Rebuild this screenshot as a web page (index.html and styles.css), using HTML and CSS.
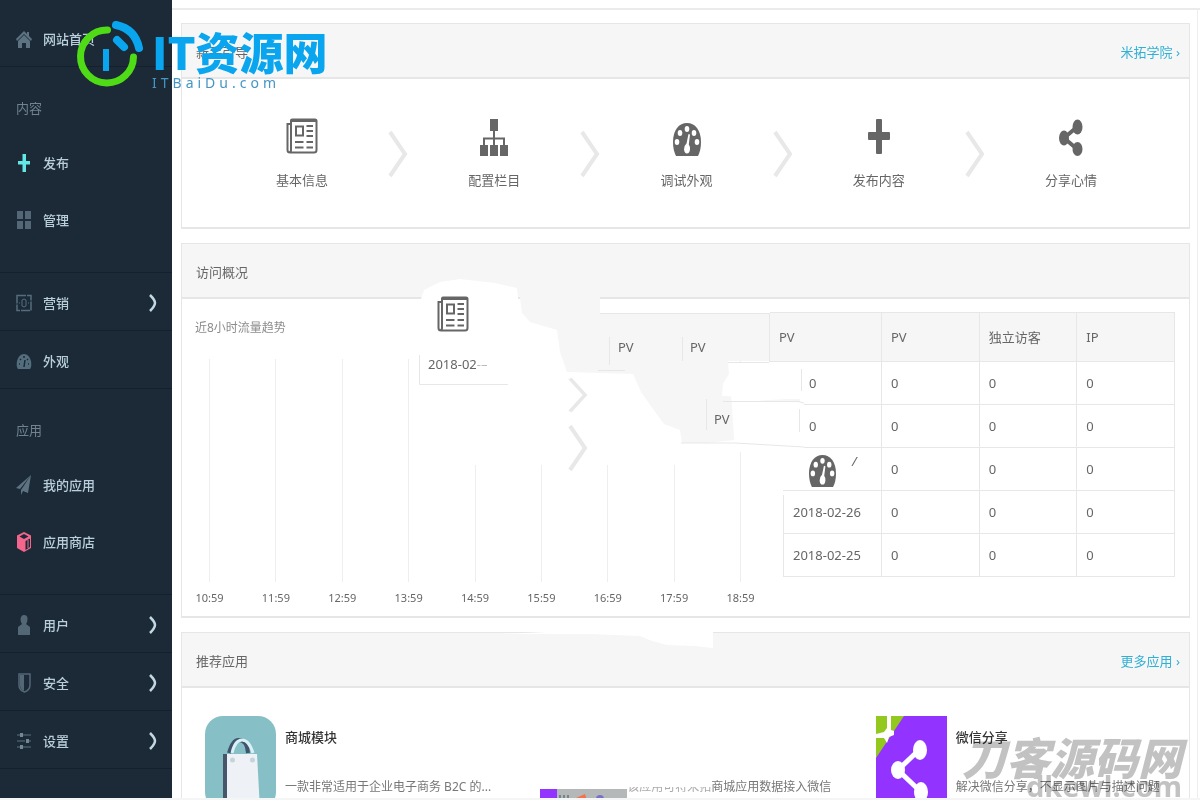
FILE: index.html
```html
<!DOCTYPE html>
<html lang="zh-CN">
<head>
<meta charset="utf-8">
<title>网站首页</title>
<link rel="stylesheet" href="styles.css">
</head>
<body>
<svg class="defs" aria-hidden="true">
  <symbol id="news" viewBox="0 0 32 36" preserveAspectRatio="none"><path d="M5 2.500Q5 1.500 6 1.500H29Q30.500 1.500 30.500 3V32Q30.500 34.500 28 34.500H4Q1.500 34.500 1.500 32V6H5M5 2.500V32Q5 34 3.500 34" fill="none" stroke="currentColor" stroke-width="2"/><path d="M6 2.500H30" stroke="currentColor" stroke-width="3"/><path d="M10 8.500h7v9h-7z" fill="none" stroke="currentColor" stroke-width="2"/><path d="M20.500 8H27M20.500 13H27M20.500 18H27M9 24h8.500M20.500 24H27M9 29.500h8.500M20.500 29.500H27" stroke="currentColor" stroke-width="2"/></symbol>
  <symbol id="gauge" viewBox="0 0 28 34" preserveAspectRatio="none"><path d="M3 34Q0 28 0 20C0 8 6 1 14 1s14 7 14 19q0 8-3 14z" fill="currentColor"/><g fill="#fff"><ellipse cx="14" cy="7" rx="2.300" ry="3"/><ellipse cx="7" cy="11" rx="2.300" ry="3"/><ellipse cx="21" cy="11" rx="2.300" ry="3"/><ellipse cx="4" cy="20" rx="2.300" ry="3"/><ellipse cx="24" cy="20" rx="2.300" ry="3"/><path d="M15.500 12l1.500.5-1.200 10q1.500 2 1.200 5-.5 4-3 4t-3-4q0-4 2.500-6z"/></g></symbol>
  <symbol id="caret" viewBox="0 0 20 48" preserveAspectRatio="none"><path d="M2 2L17 24L2 46" fill="none" stroke="currentColor" stroke-width="4"/></symbol>
  <symbol id="arrow" viewBox="0 0 8 18"><path d="M1 1Q6 6 6 9T1 17" fill="none" stroke="currentColor" stroke-width="2.500"/></symbol>
</svg>
<div class="shell">
  <nav class="sidebar">
    <a class="item home" href="#"><svg viewBox="0 0 16 20"><path d="M8 2L0 10l1 2 7-7 7 7 1-2-3-3V3h-2v2zM2 12v7h4v-5h4v5h4v-7L8 6z" fill="#5d7381"/></svg>网站首页</a>
    <section class="group">
      <h2>内容</h2>
      <a class="item" href="#"><svg viewBox="0 0 16 20"><path d="M6.500 1h3.500v7H14v3.500h-4V19H6.500v-7.500H2V8h4.500z" fill="#62e6e6"/></svg>发布</a>
      <a class="item" href="#"><svg viewBox="0 0 16 20"><path d="M1 1h6v8H1zM9 1h6v8H9zM1 11h6v8H1zM9 11h6v8H9z" fill="#536775"/></svg>管理</a>
    </section>
    <section class="stack">
      <a class="item" href="#"><svg viewBox="0 0 16 20"><path d="M1 2.500h14v15H1z" fill="none" stroke="#536d7d" stroke-width="1.500" stroke-dasharray="9 1"/><path d="M6 7q2-2 4 0v6q-2 2-4 0zM3 10h1M12 10h1" fill="none" stroke="#536d7d"/></svg>营销<svg class="arrow"><use href="#arrow"/></svg></a>
      <a class="item" href="#"><svg viewBox="0 0 16 20"><path d="M2 18Q0 15 1 10 3 3 8 3t7 7q1 5-1 8z" fill="#536d7d"/><path d="M8 5v2M4 8l1 1M12 8l-1 1M3 13h1M12 13h1M9 9l-1 7" stroke="#1c2a37" stroke-width="1.500"/></svg>外观</a>
    </section>
    <section class="group">
      <h2>应用</h2>
      <a class="item" href="#"><svg viewBox="0 0 16 20"><path d="M15 0L0 13l4 1zM15 0L5 15v5l2-4 5 2z" fill="#5d7381"/></svg>我的应用</a>
      <a class="item" href="#"><svg viewBox="0 0 16 20"><path d="M8 0L1 3.500V16l7 4 7-4V3.500z" fill="#f5668c"/><path d="M8 2L3.500 4.500 8 7l4.500-2.500zM9.500 9L14 6.500V15l-4.500 3z" fill="#1c2a37"/><path d="M12 8v8" stroke="#f5668c"/></svg>应用商店</a>
    </section>
    <section class="stack lower">
      <a class="item" href="#"><svg viewBox="0 0 16 20"><path d="M8 0q4 0 3.500 5Q11 8 10 9l4 3v8H2v-8l4-3Q4.500 7 4.500 4 5 0 8 0z" fill="#536775"/></svg>用户<svg class="arrow"><use href="#arrow"/></svg></a>
      <a class="item" href="#"><svg viewBox="0 0 16 20"><path d="M3 1h11v11q0 5-5.500 7Q3 17 3 12z" fill="none" stroke="#536775" stroke-width="1.500"/><path d="M4 2h4v16Q4 16 4 12z" fill="#536775"/></svg>安全<svg class="arrow"><use href="#arrow"/></svg></a>
      <a class="item" href="#"><svg viewBox="0 0 16 20"><path d="M1 4h3M7 4h8M1 10h8M12 10h3M1 16h3M7 16h8" stroke="#465b69" stroke-width="1.500"/><path d="M4 4h3M10 10h3M4 16h3" stroke="#738895" stroke-width="4"/></svg>设置<svg class="arrow"><use href="#arrow"/></svg></a>
    </section>
  </nav>

  <main class="main">
    <div class="topbar"></div>
    <div class="panels">
      <section class="panel">
        <header class="head"><h1>新手引导</h1><a href="#">米拓学院 ›</a></header>
        <div class="steps">
          <a class="step" href="#"><svg class="news"><use href="#news"/></svg><span>基本信息</span></a>
          <svg class="caret"><use href="#caret"/></svg>
          <a class="step" href="#"><svg viewBox="0 0 28 38"><path d="M10 1h8v12h-8zM0 27h8v11H0zM10 27h8v11h-8zM20 27h8v11h-8z" fill="currentColor"/><path d="M14 12v16M4 28v-7.500h20V28" fill="none" stroke="currentColor" stroke-width="2"/></svg><span>配置栏目</span></a>
          <svg class="caret"><use href="#caret"/></svg>
          <a class="step" href="#"><svg class="gauge"><use href="#gauge"/></svg><span>调试外观</span></a>
          <svg class="caret"><use href="#caret"/></svg>
          <a class="step" href="#"><svg viewBox="0 0 28 38"><path d="M11 2q0-1 1-1h4q1 0 1 1v12h7q1 0 1 1v6q0 1-1 1h-7v13q0 1-1 1h-4q-1 0-1-1V22H4q-1 0-1-1v-6q0-1 1-1h7z" fill="currentColor"/></svg><span>发布内容</span></a>
          <svg class="caret"><use href="#caret"/></svg>
          <a class="step" href="#"><svg viewBox="0 0 28 38"><path d="M20 9L7 20l13 11" fill="none" stroke="currentColor" stroke-width="4"/><g fill="currentColor"><ellipse cx="20.500" cy="9" rx="5" ry="7.500"/><ellipse cx="7" cy="20" rx="5" ry="7.500"/><ellipse cx="20.500" cy="31" rx="5" ry="7"/></g></svg><span>分享心情</span></a>
        </div>
      </section>

      <section class="panel">
        <header class="head"><h1>访问概况</h1></header>
        <div class="visits">
          <div class="chart">
            <h2>近8小时流量趋势</h2>
            <div class="ticks">
              <span>10:59</span><span>11:59</span><span>12:59</span><span>13:59</span><span>14:59</span><span>15:59</span><span>16:59</span><span>17:59</span><span>18:59</span>
            </div>
          </div>
          <table>
            <thead><tr><th>PV</th><th>PV</th><th>独立访客</th><th>IP</th></tr></thead>
            <tbody>
              <tr><td class="shift">0</td><td>0</td><td>0</td><td>0</td></tr>
              <tr><td class="shift">0</td><td>0</td><td>0</td><td>0</td></tr>
              <tr><td class="shift"><svg class="gauge"><use href="#gauge"/></svg><i>/</i></td><td>0</td><td>0</td><td>0</td></tr>
              <tr><td class="date">2018-02-26</td><td>0</td><td>0</td><td>0</td></tr>
              <tr><td class="date">2018-02-25</td><td>0</td><td>0</td><td>0</td></tr>
            </tbody>
          </table>
          <svg class="patch" viewBox="415 275 390 380" width="390" height="380" aria-hidden="true">
            <path d="M419 360V305L424 290 440 282 460 279 495 283 517 288 520 315 530 322 557 330 560 352 572 372H635L650 400 682 430V465H419z" fill="#fff"/>
            <path d="M517 290H600V313H770V361H728L729 374 723 384 722 396 800 399V440H735L706 443H682L680 430 664 424 653 409 641 392 633 374 567 372 560 352 557 330 530 322 522 313 520 298z" fill="#f6f6f6"/>
            <path d="M600 301H770V313H600z" fill="#fff"/>
            <path d="M729 363H804V398L738 402 745 441 804 443V452H783V580H766V452H735z" fill="#fff"/>
            <path d="M736 402H804V443L736 441z" fill="#fff"/>
            <g fill="none" stroke="#e7e7e7"><path d="M600 313.500H769M728 362.500H769M598 370.500H625M419.500 355V384.500H508M609.500 337V365M682.500 337V361M706.500 399V430M769.500 313V362M723 401.500H798L804 403M681 443L735 443 804 447M801.500 369V391M799.500 409V432M783.500 495V577"/></g>
            <path d="M500 634L590 634 640 636 652 641 667 645 695 646 713 648V630H590z" fill="#fff"/>
          </svg>
          <svg class="float news pin-news"><use href="#news"/></svg>
          <span class="float pin-date">2018-02<b>-–</b></span>
          <span class="float pin-a">PV</span>
          <span class="float pin-b">PV</span>
          <span class="float pin-c">PV</span>
          <svg class="float caret pin-d"><use href="#caret"/></svg>
          <svg class="float caret pin-e"><use href="#caret"/></svg>
        </div>
      </section>

      <section class="panel">
        <header class="head"><h1>推荐应用</h1><a href="#">更多应用 ›</a></header>
        <div class="apps">
          <article class="app">
            <svg class="logo" viewBox="0 0 71 94"><rect width="71" height="94" rx="18" fill="#86c0c6"/><path d="M18 38h5v56h-5z" fill="#46566b"/><path d="M22 38h30l3 56H22z" fill="#eef2f7"/><path d="M24 37q4-14 10-13 8 0 9 13" fill="none" stroke="#40546a" stroke-width="4"/><path d="M27 37q3-13 10-13t11 13" fill="none" stroke="#d9f1f6" stroke-width="3"/><circle cx="27.500" cy="44" r="2.500" fill="#c5d4da"/><circle cx="47.500" cy="44" r="2.500" fill="#c5d4da"/></svg>
            <div><h3>商城模块</h3><p>一款非常适用于企业电子商务 B2C 的...</p></div>
          </article>
          <article class="app cut">
            <svg class="strip" viewBox="0 0 87 11"><path d="M0 0h17v11H0z" fill="#9333ff"/><path d="M17 0h70v11H17z" fill="#b5b8b8"/><path d="M20 6v5M24 6v5M28 6v5" stroke="#76858b" stroke-width="2"/><path d="M36 9l9-4 2 6H36z" fill="#f4734e"/><circle cx="60" cy="10" r="4" fill="#7771c9"/></svg>
            <div><p><span class="half">该应用可将米拓</span>商城应用数据接入微信</p></div>
          </article>
          <article class="app">
            <svg class="logo" viewBox="0 0 71 94"><path d="M0 0h71v94H0z" fill="#9333ff"/><path d="M0 0h28L0 42z" fill="#93c81f"/><path d="M11 0h4v14l3 1v4l-5 2-2 6-3-5H0v-4l8-2 3-4z" fill="#fff"/><path d="M44 33L22 54l23 22" fill="none" stroke="#fff" stroke-width="5"/><g fill="#fff"><ellipse cx="44" cy="34" rx="7" ry="10"/><ellipse cx="22" cy="54" rx="7" ry="9"/><ellipse cx="45" cy="76" rx="7" ry="10"/></g></svg>
            <div><h3>微信分享</h3><p>解决微信分享，不显示图片与描述问题</p></div>
          </article>
        </div>
      </section>
    </div>
  </main>
</div>

<div class="brand">
  <svg viewBox="0 0 68 68" width="68" height="68"><path d="M32.500 10A26.500 26.500 0 1 0 58.500 37" fill="none" stroke="#4fdb16" stroke-width="7" stroke-linecap="round"/><path d="M41 5Q60 9 64 28M42 20l7 7" fill="none" stroke="#0aa5ef" stroke-width="8" stroke-linecap="round"/><path d="M31 29v22" stroke="#0aa5ef" stroke-width="6"/></svg>
  <div><strong>IT资源网</strong><small>ITBaiDu.com</small></div>
</div>
<div class="mark"><strong>刀客源码网</strong><small>dkewl.com</small></div>
</body>
</html>
```
FILE: styles.css
```css
* { box-sizing: border-box; }
body {
  margin: 0;
  height: 100vh;
  overflow: hidden;
  background: #fff;
  color: #666;
  font: 13px/20px "Noto Sans", "Noto Sans CJK SC", sans-serif;
}
h1, h2, h3, p { margin: 0; font-size: 13px; font-weight: 400; }
a { color: inherit; text-decoration: none; }
.defs { position: absolute; width: 0; height: 0; }
.shell { display: flex; height: 100vh; overflow: hidden; border-bottom: 2px solid #f4f6f6; }

.sidebar { flex: 0 0 172px; padding-top: 12px; background: #1c2a37; color: #b9cfdb; font-weight: 500; }
.sidebar .item { display: flex; align-items: center; height: 57px; padding: 0 15px 0 16px; }
.sidebar .item svg { width: 16px; height: 20px; margin-right: 11px; }
.sidebar .item .arrow { width: 8px; height: 18px; margin: 0 0 0 auto; color: #c3d8df; }
.sidebar .home { height: 55px; border-bottom: 1px solid #14202c; }
.group { padding: 15px 0 24px; border-bottom: 1px solid #14202c; }
.group h2 { padding: 16px; color: #71838f; }
.stack .item { height: 58px; padding-top: 2px; border-bottom: 1px solid #14202c; }
.lower .item { padding-top: 3px; }

.main { flex: 1; min-width: 0; }
.topbar { height: 10px; border-bottom: 2px solid #ebebeb; }
.panels { display: flex; flex-direction: column; gap: 14px; margin-right: 2px; padding: 13px 7px 0 9px; border-right: 1px solid #eee; }
.panel { border: 1px solid #e6e6e6; border-bottom-width: 2px; background: #fff; }
.head { display: flex; align-items: center; justify-content: space-between; height: 55px; padding: 3px 9px 0 14px; border-bottom: 2px solid #e6e6e6; background: #f6f6f6; }
.head a { color: #31b0d5; }

.steps { display: flex; align-items: center; padding: 2px 30px 0 32px; height: 148px; }
.step { flex: 1; display: flex; flex-direction: column; align-items: center; gap: 14px; color: #666; }
.step svg { width: 28px; height: 38px; }
.step .gauge { padding-top: 4px; }
.step .news { width: 32px; height: 38px; padding-bottom: 2px; }
.news { width: 32px; height: 36px; }
.caret { width: 20px; height: 48px; margin: 0 -2px; color: #e8e8e8; }

.visits { position: relative; display: grid; grid-template-columns: minmax(0, 560fr) minmax(0, 406fr); gap: 14px; padding: 13px 14px 4px 13px; }
.chart { display: flex; flex-direction: column; padding-bottom: 4px; }
.chart h2 { padding: 6px 0 21px; color: #8c8c8c; font-size: 12px; }
.ticks { flex: 1; display: flex; justify-content: space-between; }
.ticks span { display: flex; flex-direction: column; align-items: center; gap: 6px; width: 29px; font-size: 11px; }
.ticks span::before { content: ""; flex: 1; width: 1px; background: #eee; }

table { width: 100%; margin-bottom: 35px; border-collapse: collapse; table-layout: fixed; }
th, td { height: 43px; padding: 0 9px; border: 1px solid #e7e7e7; text-align: left; font-weight: 400; }
th { height: 49px; background: #f6f6f6; }
th:first-child { width: 112px; }
td.shift { padding-left: 39px; border-left-color: transparent; white-space: nowrap; }
td.shift i { margin-left: 16px; vertical-align: 8px; }
td.date { padding-left: 23px; border-left-color: transparent; }
td .gauge { width: 27px; height: 33px; vertical-align: middle; }

.float, .patch { position: absolute; }
.patch { left: 233px; top: -24px; }
.pin-news { left: 255px; top: -3px; }
.pin-date { left: 246px; top: 55px; }
.pin-date b { color: #bbb; font-weight: 400; }
.pin-a { left: 436px; top: 38px; }
.pin-b { left: 508px; top: 38px; }
.pin-c { left: 532px; top: 110px; }
.pin-d { left: 388px; top: 78px; height: 36px; }
.pin-e { left: 388px; top: 125px; }

.apps { display: grid; grid-template-columns: repeat(3, minmax(0, 1fr)); padding: 28px 0 0 23px; margin-right: -22px; }
.app { display: flex; gap: 9px; white-space: nowrap; }
.app .logo { flex: none; width: 71px; height: 94px; }
.app h3 { padding: 11px 0 30px; color: #333; font-weight: 500; }
.app p { color: #777; font-size: 12px; }
.cut { gap: 0; padding-top: 61px; }
.cut .strip { width: 87px; height: 11px; margin-top: 12px; }
.half { position: relative; color: #aaa; }
.half::before { content: ""; position: absolute; inset: 0 0 8px; background: #fff; }

.brand { position: absolute; left: 75px; top: 20px; display: flex; gap: 9px; color: #0aa5ef; }
.brand div, .mark { display: flex; flex-direction: column; }
.brand strong { font: 900 44px/62px "Noto Sans CJK SC", sans-serif; }
.brand small { margin-top: -8px; color: #4596c4; font-size: 14px; line-height: 18px; letter-spacing: 4px; }
.mark { position: absolute; right: 18px; top: 732px; align-items: flex-end; color: #c2c2c2; mix-blend-mode: multiply; }
.mark strong { font: italic 900 44px/48px "Noto Sans CJK SC", sans-serif; }
.mark small { font-weight: 700; font-size: 29px; line-height: 12px; }
```
